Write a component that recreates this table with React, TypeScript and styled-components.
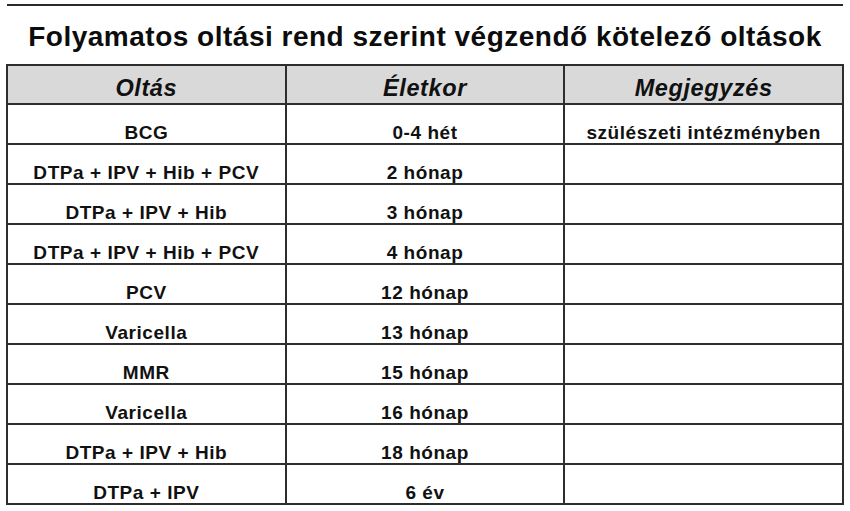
import React from 'react';
import styled, { createGlobalStyle } from 'styled-components';

const GlobalStyle = createGlobalStyle`
  html, body {
    margin: 0;
    padding: 0;
    background: #ffffff;
  }
  body {
    font-family: "Liberation Sans", Arial, sans-serif;
    color: #111;
  }
`;

const rows: [string, string, string][] = [
  ['BCG', '0-4 hét', 'szülészeti intézményben'],
  ['DTPa + IPV + Hib + PCV', '2 hónap', ''],
  ['DTPa + IPV + Hib', '3 hónap', ''],
  ['DTPa + IPV + Hib + PCV', '4 hónap', ''],
  ['PCV', '12 hónap', ''],
  ['Varicella', '13 hónap', ''],
  ['MMR', '15 hónap', ''],
  ['Varicella', '16 hónap', ''],
  ['DTPa + IPV + Hib', '18 hónap', ''],
  ['DTPa + IPV', '6 év', ''],
];

const Page = styled.div`
  width: 850px;
  height: 511px;
  box-sizing: border-box;
  padding: 4px 6px 0 6px;
  display: flex;
  flex-direction: column;
`;

const Rule = styled.div`
  height: 2px;
  margin: 0 1px;
  background: #2a2a2a;
`;

const Title = styled.h1`
  margin: 0;
  height: 58px;
  box-sizing: border-box;
  padding-top: 16px;
  text-align: center;
  font-size: 28px;
  letter-spacing: 0.5px;
  line-height: 30px;
  font-weight: 700;
  color: #0c0c0c;
  white-space: nowrap;
`;

const Table = styled.table`
  width: 838px;
  border-collapse: collapse;
  table-layout: fixed;
  border: 2px solid #2e2e2e;
`;

const HeadCell = styled.th`
  height: 39px;
  padding: 0 0 3px;
  box-sizing: border-box;
  background: #d9d9d9;
  border: 2px solid #2e2e2e;
  font-size: 23.5px;
  letter-spacing: 0.6px;
  font-style: italic;
  font-weight: 700;
  text-align: center;
  vertical-align: bottom;
  line-height: 24px;
  color: #111;
`;

const Cell = styled.td`
  height: 40px;
  padding: 0;
  box-sizing: border-box;
  border: 2px solid #2e2e2e;
  font-size: 19px;
  letter-spacing: 0.55px;
  font-weight: 700;
  text-align: center;
  vertical-align: bottom;
  line-height: 20px;
  color: #111;
  white-space: nowrap;
`;

export default function App() {
  return (
    <>
      <GlobalStyle />
      <Page>
        <Rule />
        <Title>Folyamatos oltási rend szerint végzendő kötelező oltások</Title>
        <Table>
          <thead>
            <tr>
              <HeadCell>Oltás</HeadCell>
              <HeadCell>Életkor</HeadCell>
              <HeadCell>Megjegyzés</HeadCell>
            </tr>
          </thead>
          <tbody>
            {rows.map(([vaccine, age, note], i) => (
              <tr key={i}>
                <Cell>{vaccine}</Cell>
                <Cell>{age}</Cell>
                <Cell>{note}</Cell>
              </tr>
            ))}
          </tbody>
        </Table>
      </Page>
    </>
  );
}
